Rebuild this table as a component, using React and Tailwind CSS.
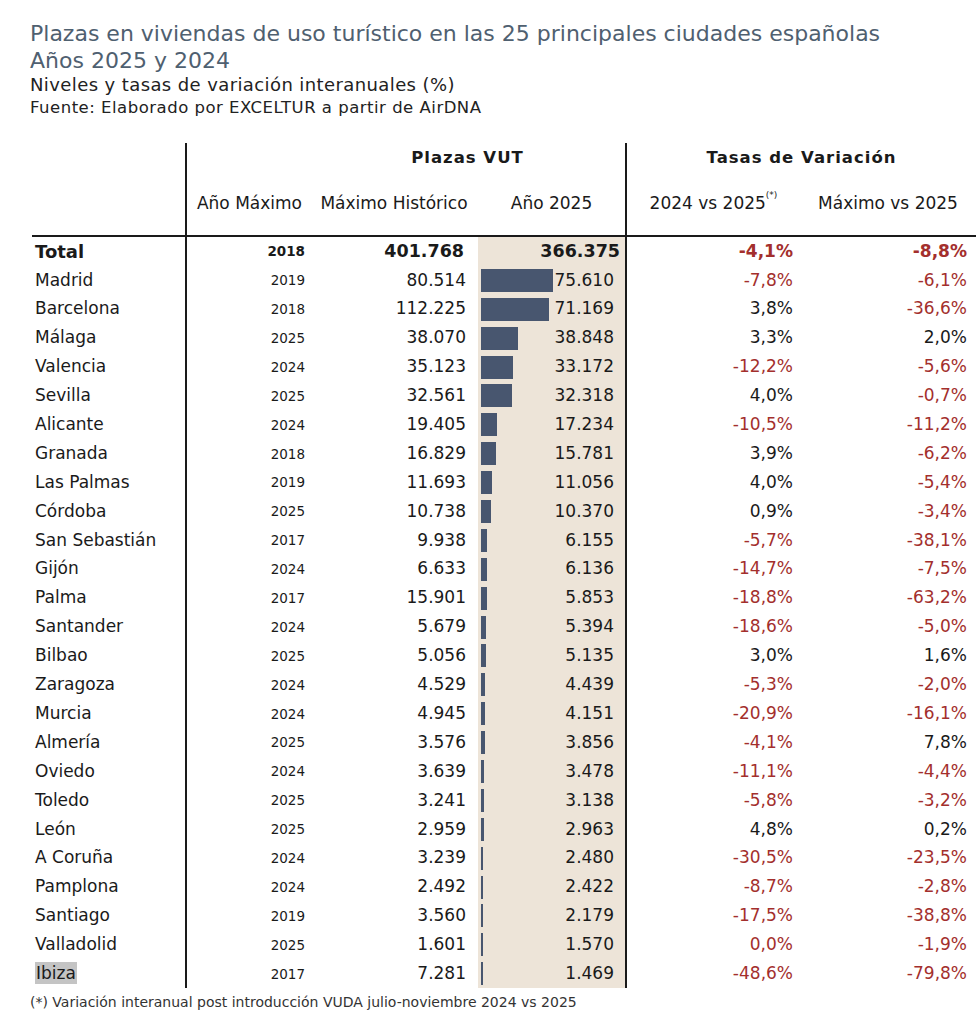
import React from 'react';

const rows = [
    ['Madrid', '2019', '80.514', '75.610', '-7,8%', '-6,1%'],
    ['Barcelona', '2018', '112.225', '71.169', '3,8%', '-36,6%'],
    ['Málaga', '2025', '38.070', '38.848', '3,3%', '2,0%'],
    ['Valencia', '2024', '35.123', '33.172', '-12,2%', '-5,6%'],
    ['Sevilla', '2025', '32.561', '32.318', '4,0%', '-0,7%'],
    ['Alicante', '2024', '19.405', '17.234', '-10,5%', '-11,2%'],
    ['Granada', '2018', '16.829', '15.781', '3,9%', '-6,2%'],
    ['Las Palmas', '2019', '11.693', '11.056', '4,0%', '-5,4%'],
    ['Córdoba', '2025', '10.738', '10.370', '0,9%', '-3,4%'],
    ['San Sebastián', '2017', '9.938', '6.155', '-5,7%', '-38,1%'],
    ['Gijón', '2024', '6.633', '6.136', '-14,7%', '-7,5%'],
    ['Palma', '2017', '15.901', '5.853', '-18,8%', '-63,2%'],
    ['Santander', '2024', '5.679', '5.394', '-18,6%', '-5,0%'],
    ['Bilbao', '2025', '5.056', '5.135', '3,0%', '1,6%'],
    ['Zaragoza', '2024', '4.529', '4.439', '-5,3%', '-2,0%'],
    ['Murcia', '2024', '4.945', '4.151', '-20,9%', '-16,1%'],
    ['Almería', '2025', '3.576', '3.856', '-4,1%', '7,8%'],
    ['Oviedo', '2024', '3.639', '3.478', '-11,1%', '-4,4%'],
    ['Toledo', '2025', '3.241', '3.138', '-5,8%', '-3,2%'],
    ['León', '2025', '2.959', '2.963', '4,8%', '0,2%'],
    ['A Coruña', '2024', '3.239', '2.480', '-30,5%', '-23,5%'],
    ['Pamplona', '2024', '2.492', '2.422', '-8,7%', '-2,8%'],
    ['Santiago', '2019', '3.560', '2.179', '-17,5%', '-38,8%'],
    ['Valladolid', '2025', '1.601', '1.570', '0,0%', '-1,9%'],
    ['Ibiza', '2017', '7.281', '1.469', '-48,6%', '-79,8%'],
];

const MAX_BAR = 72;
const MAX_VAL = 75610;

// red for negatives and zero
const rateColor = (v) => (v.startsWith('-') || v === '0,0%' ? 'text-[#a32f2d]' : 'text-[#1a1a1a]');

const App = () => {
    return (
        <div className="w-[976px] h-[1024px] bg-white pl-[30px] pt-[20px] text-[#1a1a1a]" style={{ fontFamily: '"DejaVu Sans", "Noto Sans", sans-serif' }}>
            <h1 className="text-[22px] leading-[27px] text-[#4f6070]">
                <span className="block">Plazas en viviendas de uso turístico en las 25 principales ciudades españolas</span>
                <span className="block">Años 2025 y 2024</span>
            </h1>
            <p className="text-[18px] leading-[22px] tracking-[0.4px] text-[#222]">Niveles y tasas de variación interanuales (%)</p>
            <p className="text-[16.5px] leading-[24px] tracking-[0.5px] text-[#222]">Fuente: Elaborado por EXCELTUR a partir de AirDNA</p>

            <div className="mt-[23px] w-[946px]">
                {/* Header */}
                <div className="grid grid-cols-[155px_125px_168px_147px_175px_176px]">
                    <div className="row-span-2" />
                    <div className="h-[30px] border-l-2 border-[#1a1a1a]" />
                    <div className="col-span-2 h-[30px] flex items-center justify-center font-bold text-[16.5px] tracking-[1px]">Plazas VUT</div>
                    <div className="col-span-2 h-[30px] flex items-center justify-center font-bold text-[16.5px] tracking-[1px] border-l-2 border-[#1a1a1a]">Tasas de Variación</div>
                    <div className="h-[62px] flex items-center justify-center border-l-2 border-[#1a1a1a] text-[17px] whitespace-nowrap pl-[2px]">Año Máximo</div>
                    <div className="h-[62px] flex items-center justify-center text-[17px] whitespace-nowrap">Máximo Histórico</div>
                    <div className="h-[62px] flex items-center justify-center text-[17px]">Año 2025</div>
                    <div className="h-[62px] flex items-center justify-center text-[17px] border-l-2 border-[#1a1a1a]">
                        <span>2024 vs 2025<sup className="text-[9px] align-[7px]">(*)</sup></span>
                    </div>
                    <div className="h-[62px] flex items-center justify-center text-[17px]">Máximo vs 2025</div>
                </div>
                <div className="ml-[2px] h-[2px] bg-[#1a1a1a]" />

                {/* Total */}
                <div className="grid grid-cols-[155px_125px_168px_147px_175px_176px] h-[28.9px] items-center">
                    <div className="pl-[5px] font-bold text-[18px]">Total</div>
                    <div className="h-full flex items-center justify-end pr-[5px] border-l-2 border-[#1a1a1a] font-bold text-[13.5px]">2018</div>
                    <div className="text-right pr-[14px] font-bold text-[17.5px]">401.768</div>
                    <div className="h-full flex items-center justify-end pr-[5px] bg-[#ede4d8] font-bold text-[17.5px]">366.375</div>
                    <div className="h-full flex items-center justify-end pr-[7px] border-l-2 border-[#1a1a1a] font-bold text-[17px] text-[#a32f2d]">-4,1%</div>
                    <div className="text-right pr-[9px] font-bold text-[17px] text-[#a32f2d]">-8,8%</div>
                </div>

                {rows.map(([city, year, max, cur, r1, r2]) => {
                    const w = Math.max(2, (parseFloat(cur.replace('.', '')) / MAX_VAL) * MAX_BAR);
                    return (
                        <div key={city} className="grid grid-cols-[155px_125px_168px_147px_175px_176px] h-[28.9px] items-center text-[17px]">
                            <div className="pl-[5px]">
                                {city === 'Ibiza' ? <span className="bg-[#c4c4c4] px-[1px] py-[1px]">{city}</span> : city}
                            </div>
                            <div className="h-full flex items-center justify-end pr-[5px] border-l-2 border-[#1a1a1a] text-[13.5px]">{year}</div>
                            <div className="text-right pr-[12px]">{max}</div>
                            <div className="h-full flex items-center bg-[#ede4d8] pl-[3px] pr-[11px]">
                                <div className="h-[23px] bg-[#48566f]" style={{ width: `${w}px` }} />
                                <div className="flex-1 text-right">{cur}</div>
                            </div>
                            <div className={`h-full flex items-center justify-end pr-[7px] border-l-2 border-[#1a1a1a] ${rateColor(r1)}`}>{r1}</div>
                            <div className={`text-right pr-[9px] ${rateColor(r2)}`}>{r2}</div>
                        </div>
                    );
                })}
            </div>

            <p className="mt-[4px] text-[14px] leading-[20px] text-[#333]">(*) Variación interanual post introducción VUDA julio-noviembre 2024 vs 2025</p>
        </div>
    );
};

export default App;
